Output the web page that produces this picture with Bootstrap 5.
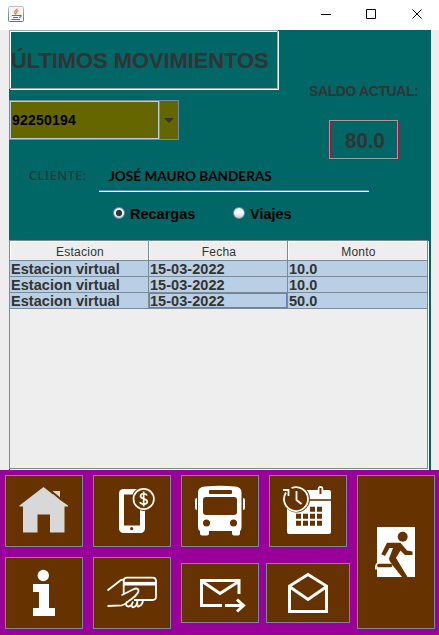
<!DOCTYPE html>
<html lang="es">
<head>
<meta charset="utf-8">
<meta name="viewport" content="width=device-width, initial-scale=1">
<title>Últimos movimientos</title>
<link href="https://cdn.jsdelivr.net/npm/bootstrap@5.3.0/dist/css/bootstrap.min.css" rel="stylesheet">
<style>
body{width:439px;height:635px;background:#eee;color:#333;font-family:"Liberation Sans",Arial,sans-serif;font-size:15px;line-height:1;overflow:hidden}
svg{display:block}
.titlebar{height:30px;background:#fff;padding:6px 12px 0 8px}
.panel{height:440px;margin-left:9px;margin-right:8px;background:#066;padding-right:2px}
.topzone{height:210px}
.heading{width:269px;height:59px;border:1px solid #a0a0a0;box-shadow:1px 1px 0 #fff,inset 1px 1px 0 #fff;font-size:22px;letter-spacing:-.1px;padding:3px 0 0 1px}
.leftcol{width:290px}
.combo{width:170px;height:40px;margin-top:11px;border:1px solid #7a8a99;background:#660;color:#000}
.combo-value{width:149px;border:1px solid #b8cfe5;padding-left:1px;font-size:14px;letter-spacing:.2px}
.combo-arrow{border-left:1px solid #7a8a99}
.saldo-label{font-size:14px;margin-top:54px;padding-left:10px;letter-spacing:-.4px}
.saldo{width:69px;height:39px;margin-left:30px;margin-top:22px;border:1px solid #a0a0a0;box-shadow:1px 1px 0 #c03,inset 1px 1px 0 #c03;font-size:21.500px;padding:4px 0 0 2px}
.saldo span{transform:scaleX(.95)}
.cliente{height:33px;padding-left:20px}
.cliente-label{font-family:"Noto Sans",sans-serif;font-size:13px;font-weight:500;letter-spacing:.3px;width:70px;padding-top:10px}
.cliente-name{width:270px;height:33px;border-bottom:1px solid #fff;box-shadow:inset 0 -1px 0 #6382bf;font-family:Lato,sans-serif;font-size:13.500px;letter-spacing:.05px;color:#000;padding:11px 0 0 10px;white-space:nowrap}
.radios{color:#000;padding-left:104px;padding-top:15px;font-size:14.500px}
.radio-item{width:120px}
.dot{width:12px;height:12px;border-radius:50%;border:1px solid #7a8a99;background:linear-gradient(#e4ebf3,#fff 45%,#b8cfe5);margin-right:5px}
.dot.on{background:radial-gradient(circle,#333 0 2.700px,transparent 3.600px),linear-gradient(#e4ebf3,#fff 45%,#b8cfe5)}
.tablebox{height:229px;background:#eee;border:1px solid #7a8a99;margin-right:1px;box-shadow:1px 1px 0 #fff}
.moves{width:418px;table-layout:fixed;border-collapse:separate;border-spacing:0}
.moves th{height:20px;padding:2px 0 0 2px;font-weight:400;font-size:12px;letter-spacing:.25px;text-align:center;border-right:1px solid #7a8a99;border-bottom:1px solid #7a8a99;box-shadow:inset 1px 1px 0 #fff}
.moves th:nth-child(-n+2){width:139px}
.moves td{height:16px;padding:1px 0 0 1px;font-weight:700;font-size:14.500px;letter-spacing:.05px;line-height:14px;background:#b8cfe5;border-right:1px solid #7a8a99;border-bottom:1px solid #7a8a99;white-space:nowrap}
.moves td.focused{box-shadow:inset 0 0 0 1px #6382bf}
.dock{height:165px;background:#909;padding:5px;gap:10px}
.dockcol{width:78px;height:154px;gap:10px}
.tile{width:78px;height:72px;background:#630;border:1px solid #7a8a99;border-radius:0;padding:0;display:flex;flex:none}
.tile.low{height:60px;margin:6px 0}
.tile.wide{width:84px;margin-left:-3px}
.tile.tall{height:154px}
</style>
<script src="https://cdn.jsdelivr.net/npm/bootstrap@5.3.0/dist/js/bootstrap.bundle.min.js"></script>
</head>
<body>
<header class="titlebar d-flex align-items-start justify-content-between">
  <svg width="16" height="16" viewBox="0 0 16 16"><defs><linearGradient id="g" x2="0" y2="1"><stop stop-color="#b9c2ca"/><stop offset="1" stop-color="#4e7896"/></linearGradient></defs><rect x=".5" y=".5" width="15" height="15" rx="1" fill="#f4f6f8" stroke="url(#g)"/><path d="M9 2.500C10 4 5.500 5 6.500 6.500L8 8.500M10.500 4.500C8 5.500 8 6 9 7.500" fill="none" stroke="#e8862e" stroke-width="1.300"/><path d="M4 9.500h7.500c2-.8 2.500 1.500-.5 2M5 11.500h5M3.500 13.500h8.500" fill="none" stroke="#4b7897" stroke-width="1.200"/></svg>
  <svg width="106" height="24" viewBox="321 6 106 24" fill="none" stroke="#000"><path d="M321 14.500h10M366.500 9.500h9v9h-9zM412.500 9.500l9 9M421.500 9.500l-9 9"/></svg>
</header>

<main class="panel">
  <section class="topzone">
    <div class="d-flex">
      <div class="leftcol">
        <h1 class="heading d-flex align-items-center fw-bold m-0"><span class="text-nowrap">ÚLTIMOS MOVIMIENTOS</span></h1>
        <div class="combo d-flex fw-bold">
          <div class="combo-value d-flex align-items-center">92250194</div>
          <div class="combo-arrow flex-fill d-flex align-items-center justify-content-center"><svg width="10" height="5"><path d="M0 0h10L5 5z" fill="#333"/></svg></div>
        </div>
      </div>
      <div>
        <div class="saldo-label fw-bold text-nowrap">SALDO ACTUAL:</div>
        <div class="saldo fw-bold d-flex align-items-center justify-content-center"><span>80.0</span></div>
      </div>
    </div>
    <div class="cliente d-flex">
      <div class="cliente-label">CLIENTE:</div>
      <div class="cliente-name fw-bold">JOSÉ MAURO BANDERAS</div>
    </div>
    <div class="radios d-flex fw-bold">
      <div class="radio-item d-flex"><span class="dot on"></span><span>Recargas</span></div>
      <div class="radio-item d-flex"><span class="dot"></span><span>Viajes</span></div>
    </div>
  </section>

  <section class="tablebox">
    <table class="moves">
      <thead><tr><th>Estacion</th><th>Fecha</th><th>Monto</th></tr></thead>
      <tbody>
        <tr><td>Estacion virtual</td><td>15-03-2022</td><td>10.0</td></tr>
        <tr><td>Estacion virtual</td><td>15-03-2022</td><td>10.0</td></tr>
        <tr><td>Estacion virtual</td><td class="focused">15-03-2022</td><td>50.0</td></tr>
      </tbody>
    </table>
  </section>
</main>

<nav class="dock d-flex">
  <div class="dockcol d-flex flex-column">
    <button class="tile" aria-label="Inicio"><svg width="76" height="70" viewBox="6 476 76 70"><path d="M19.500 505.500L43.500 487 53 494.500V491h7v9l8 5.500v1h-3.500V532.500H50V514.500H37.500V532.500H23V506.500h-3.500z" fill="#d8d8d8"/><path d="M51.500 491.500l9 7.500" stroke="#630" stroke-width="2"/></svg></button>
    <button class="tile" aria-label="Información"><svg width="76" height="70" viewBox="6 558 76 70" fill="#fff"><circle cx="43.300" cy="575.500" r="5.700"/><path d="M33 584h16v24h6v8H33v-8h6v-16h-6z"/></svg></button>
  </div>
  <div class="dockcol d-flex flex-column">
    <button class="tile" aria-label="Pago móvil"><svg width="76" height="70" viewBox="94 476 76 70"><rect x="119" y="489" width="26" height="44" rx="4.500" fill="#fff"/><path d="M124 494.500h16V525.500h-16z" fill="#630"/><circle cx="131.700" cy="528.700" r="1.600" fill="#630"/><circle cx="143.700" cy="499" r="12" fill="#630"/><circle cx="143.700" cy="499" r="10.200" fill="#630" stroke="#fff" stroke-width="1.700"/><path d="M147 495.500c-1-2.500-6.500-2.300-6.500.6 0 3.600 6.800 2 6.800 5.700 0 3-6.300 3.200-7.300.2M143.700 491.500v15" fill="none" stroke="#fff" stroke-width="1.700"/></svg></button>
    <button class="tile" aria-label="Tarjeta"><svg width="76" height="70" viewBox="94 558 76 70" fill="none" stroke="#fff" stroke-width="1.800" stroke-linejoin="round"><path d="M123.700 594V581q0-3.300 3.300-3.300h25.500q3.500 0 3.500 3.500V596.500q0 3.500-3.500 3.500H134"/><path d="M124 583.700h32" stroke-width="3.600"/><path d="M107.500 590.500L120 580.700q1-1 3.500-1M121.500 595.200L133.500 589.200c3.500-1.700 6 0 4.500 3.300-2 4-5 5.500-8 7.500-3 2-4.500 5-8.500 5.300L107.500 606M127 601.500c-2 3-.5 5 1.500 5s3.500-1.500 4.500-5M132 603.500c-1 4 1 4 2 3.500 2-.5 3-2.500 3.500-6M137.500 603.500c-.5 3 .5 3.500 2 2.500 2-.8 3-2.500 3.500-5.500"/></svg></button>
  </div>
  <div class="dockcol d-flex flex-column">
    <button class="tile" aria-label="Autobús"><svg width="76" height="70" viewBox="182 476 76 70"><path d="M205 486.500q15-1.500 30 0 6.500.5 6.500 6V527q0 3-1.500 4v2.500q0 2-2 2h-4q-2 0-2-2V531H209v2.500q0 2-2 2h-5q-2 0-2-2V531q-2-1-2-4V492.500q0-5.500 7-6zM197 498v12q-2 0-2-2V500q0-2 2-2zM243 498v12q2 0 2-2V500q0-2-2-2z" fill="#fff"/><g fill="#630"><rect x="209" y="490" width="23" height="4" rx="1"/><rect x="203" y="497" width="34" height="18" rx="3"/><circle cx="206.500" cy="523" r="3.500"/><circle cx="233.500" cy="523" r="3.500"/></g></svg></button>
    <button class="tile low" aria-label="Enviar"><svg width="76" height="58" viewBox="182 564 76 58" fill="none" stroke="#fff" stroke-width="3"><path d="M239 594V580.500H201.500V605.500H222M203 582l17 11.500L238 582M225 605.500h18"/><path d="M237 599.500l6.500 6-6.500 6"/></svg></button>
  </div>
  <div class="dockcol d-flex flex-column">
    <button class="tile" aria-label="Historial"><svg width="76" height="70" viewBox="270 476 76 70"><rect x="287" y="490" width="44" height="44" rx="2" fill="#fff"/><path d="M310 500h21" stroke="#630" stroke-width="1.600"/><path d="M320.500 488.700v4" stroke="#fff" stroke-width="5.500" stroke-linecap="round"/><path d="M320.500 488v6" stroke="#630" stroke-width="2"/><path d="M310 506.700h5v5h-5zM317 506.700h5v5h-5zM296 513.700h5v5h-5zM303 513.700h5v5h-5zM310 513.700h5v5h-5zM317 513.700h5v5h-5zM296 520.700h5v5h-5zM303 520.700h5v5h-5zM310 520.700h5v5h-5zM317 520.700h5v5h-5z" fill="#630"/><circle cx="296.500" cy="499" r="13.500" fill="#630"/><path d="M291.500 488A12 12 0 1 1 286 492.500" fill="none" stroke="#fff" stroke-width="1.800"/><path d="M283 490h5.500v6M296.500 491v9l5 4" fill="none" stroke="#fff" stroke-width="1.800"/></svg></button>
    <button class="tile low wide" aria-label="Mensajes"><svg width="82" height="58" viewBox="267 564 82 58" fill="none" stroke="#fff" stroke-width="3"><path d="M289.500 611.500V586L308 574.500 326.500 586V611.500zM290 587l18 12.500L326 587"/></svg></button>
  </div>
  <div class="dockcol">
    <button class="tile tall" aria-label="Salir"><svg width="76" height="152" viewBox="358 476 76 152"><path d="M377 527h38v50H377z" fill="#fff"/><path d="M379 563.500h-1.500q-2 1.500-1.500 6" fill="none" stroke="#fff" stroke-width="1.700"/><circle cx="402.700" cy="536.700" r="5" fill="#630"/><path d="M387 542.700h13.500L407 550.500l5.500 1v3.500H405l-4.500-4.500-4.500 7.500L407.500 577H402L392 564.500q-3-3.500-3-6l4-10.500h-3.500l-4.500 8-3.700-1.800z" fill="#630"/><path d="M378.800 565.500H390.500" fill="none" stroke="#630" stroke-width="3.500" stroke-linecap="round"/></svg></button>
  </div>
</nav>
</body>
</html>
